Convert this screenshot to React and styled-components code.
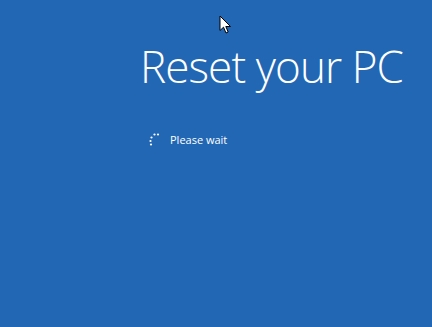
import React from "react";
import styled, { createGlobalStyle } from "styled-components";

const Global = createGlobalStyle`
  html, body { margin: 0; padding: 0; background: #2267b4; }
  body { font-family: "Open Sans", "Noto Sans", sans-serif; }
`;

const Screen = styled.div`
  position: relative;
  width: 432px;
  height: 327px;
  background: #2267b4;
  color: #ffffff;
  overflow: hidden;
  display: flex;
  flex-direction: column;
  padding: 38px 0 0 140px;
  box-sizing: border-box;
`;

const Title = styled.h1`
  margin: 0;
  font-family: "Open Sans", sans-serif;
  font-weight: 300;
  font-size: 44px;
  line-height: 56px;
  letter-spacing: -0.9px;
  white-space: nowrap;
`;

const Status = styled.div`
  display: flex;
  align-items: center;
  gap: 9px;
  margin-top: 38px;
  padding-left: 8px;
`;

const Label = styled.span`
  font-family: "Open Sans", sans-serif;
  font-size: 11px;
  line-height: 16px;
`;

const Cursor = styled.svg`
  position: absolute;
  left: 219px;
  top: 15px;
`;

function Spinner() {
  const dots = [
    [6.5, 1.5],
    [10, 1.5],
    [3.5, 4.5],
    [2.5, 8],
    [3, 11.5],
  ];
  return (
    <svg width="13" height="14" viewBox="0 0 13 14">
      {dots.map(([x, y], i) => (
        <circle key={i} cx={x} cy={y} r="1.1" fill="#fff" />
      ))}
    </svg>
  );
}

export default function App() {
  return (
    <>
      <Global />
      <Screen>
        <Title>Reset your PC</Title>
        <Status>
          <Spinner />
          <Label>Please wait</Label>
        </Status>
        <Cursor width="13" height="20" viewBox="0 0 13 20">
          <path
            d="M1 1 L1 15.5 L4.5 12.2 L7 18 L9.2 17 L6.8 11.5 L11.5 11.5 Z"
            fill="#fff"
            stroke="#000"
            strokeWidth="1"
            strokeLinejoin="miter"
          />
        </Cursor>
      </Screen>
    </>
  );
}
